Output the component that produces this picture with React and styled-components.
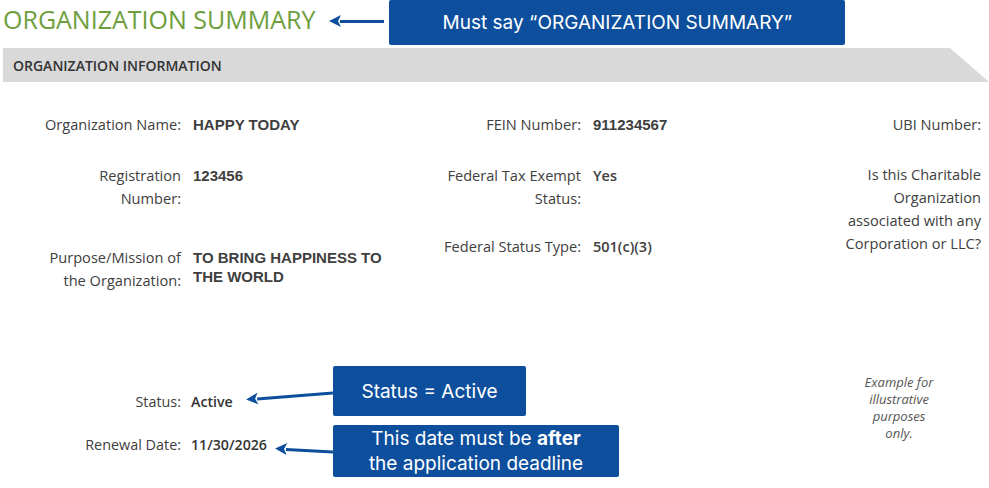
import React from 'react';
import styled, {createGlobalStyle} from 'styled-components';

const GlobalStyle = createGlobalStyle`
  html, body {
    margin: 0;
    padding: 0;
    background: #ffffff;
  }
  body {
    font-family: "Open Sans", "Liberation Sans", sans-serif;
    color: #3d3d3d;
  }
`;

const BLUE = '#0d4f9d';

const Page = styled.div`
  width: 989px;
  height: 488px;
  overflow: hidden;
  position: relative;
`;

const Header = styled.div`
  display: flex;
  align-items: flex-start;
  height: 45px;
  margin-left: 3px;
`;

const Title = styled.h1`
  margin: 0;
  padding-top: 4px;
  font-family: "Open Sans", sans-serif;
  font-weight: 400;
  font-size: 25px;
  line-height: 30px;
  color: #6e9e3c;
  white-space: nowrap;
`;

const Callout = styled.div`
  display: flex;
  align-items: center;
  justify-content: center;
  flex-direction: column;
  width: ${p => p.$w}px;
  height: ${p => p.$h}px;
  background: ${BLUE};
  border-radius: 2px;
  color: #ffffff;
  font-family: "Inter", "Roboto", sans-serif;
  font-size: 19px;
  line-height: 25px;
  text-align: center;
  flex-shrink: 0;

  b {
    font-weight: 700;
  }
`;

const ArrowWrap = styled.div`
  display: flex;
  align-items: center;
  width: ${p => (p.$w ? `${p.$w}px` : 'auto')};
  flex: ${p => (p.$w ? 'none' : '1')};
  height: 12px;
  margin: ${p => p.$m || '0'};
  transform: translateY(${p => p.$dy || 0}px) rotate(${p => p.$tilt || 0}deg);
  transform-origin: center;
`;

const ArrowShaft = styled.div`
  flex: 1;
  height: 3px;
  margin-left: -1px;
  background: ${BLUE};
`;

const Arrow = ({w, m, dy, tilt}) => (
  <ArrowWrap $w={w} $m={m} $dy={dy} $tilt={tilt}>
    <svg width="12" height="12" viewBox="0 0 12 12">
      <polygon points="0,6 12,0 9,6 12,12" fill={BLUE} />
    </svg>
    <ArrowShaft />
  </ArrowWrap>
);

const SectionBar = styled.div`
  display: flex;
  align-items: center;
  height: 34px;
  margin: 3px 0 0 3px;
  width: 986px;
  padding-left: 10px;
  box-sizing: border-box;
  background: #d9d9d9;
  clip-path: polygon(0 0, 947px 0, 100% 100%, 0 100%);
  font-weight: 600;
  font-size: 14px;
  color: #333333;
`;

const FieldGrid = styled.div`
  display: grid;
  grid-template-columns: 400px 400px 189px;
  padding-top: 31px;
  height: 253px;
  box-sizing: border-box;
`;

const Column = styled.div`
  display: flex;
  flex-direction: column;
`;

const Field = styled.div`
  display: grid;
  grid-template-columns: 181px 1fr;
  column-gap: 12px;
  margin-top: ${p => p.$gap || 0}px;
`;

const Label = styled.div`
  text-align: right;
  font-size: 14.6px;
  line-height: 23px;
  color: #404040;
  white-space: nowrap;
`;

const Value = styled.div`
  padding-top: 2px;
  font-family: ${p => (p.$open ? '"Open Sans", sans-serif' : '"Liberation Sans", Arial, sans-serif')};
  font-weight: ${p => (p.$open ? 600 : 700)};
  font-size: ${p => (p.$open ? 14.5 : 15)}px;
  line-height: 19px;
  color: #404040;
  padding-right: 8px;
`;

const Bottom = styled.div`
  display: flex;
  justify-content: space-between;
  margin-top: 31px;
`;

const StatusList = styled.div`
  display: flex;
  flex-direction: column;
  gap: 9px;
`;

const StatusRow = styled.div`
  display: grid;
  grid-template-columns: 181px 152px auto;
  align-items: start;
`;

const StatusLabel = styled.div`
  padding-top: ${p => p.$top}px;
  text-align: right;
  font-size: 14.4px;
  line-height: 20px;
  color: #404040;
  white-space: nowrap;
`;

const StatusCell = styled.div`
  display: flex;
  align-items: center;
  padding: ${p => p.$top}px 0 0 10px;
  height: 20px;
`;

const StatusValue = styled.span`
  font-weight: 600;
  font-size: 14.2px;
  line-height: 20px;
  color: #333333;
  white-space: nowrap;
`;

const Note = styled.div`
  width: 90px;
  margin: 8px 45px 0 0;
  font-style: italic;
  font-size: 13px;
  line-height: 17px;
  text-align: center;
  color: #555555;
`;

export default function App() {
  return (
    <Page>
      <GlobalStyle />
      <Header>
        <Title>ORGANIZATION SUMMARY</Title>
        <Arrow w={55} m="0 5px 0 14px" dy={15} />
        <Callout $w={456} $h={45}>Must say “ORGANIZATION SUMMARY”</Callout>
      </Header>

      <SectionBar>ORGANIZATION INFORMATION</SectionBar>

      <FieldGrid>
        <Column>
          <Field>
            <Label>Organization Name:</Label>
            <Value>HAPPY TODAY</Value>
          </Field>
          <Field $gap={28}>
            <Label>Registration<br />Number:</Label>
            <Value>123456</Value>
          </Field>
          <Field $gap={36}>
            <Label>Purpose/Mission of<br />the Organization:</Label>
            <Value>TO BRING HAPPINESS TO THE WORLD</Value>
          </Field>
        </Column>
        <Column>
          <Field>
            <Label>FEIN Number:</Label>
            <Value>911234567</Value>
          </Field>
          <Field $gap={28}>
            <Label>Federal Tax Exempt<br />Status:</Label>
            <Value $open>Yes</Value>
          </Field>
          <Field $gap={25}>
            <Label>Federal Status Type:</Label>
            <Value $open>501(c)(3)</Value>
          </Field>
        </Column>
        <Column>
          <Field>
            <Label>UBI Number:</Label>
          </Field>
          <Field $gap={27}>
            <Label>
              Is this Charitable<br />
              Organization<br />
              associated with any<br />
              Corporation or LLC?
            </Label>
          </Field>
        </Column>
      </FieldGrid>

      <Bottom>
        <StatusList>
          <StatusRow>
            <StatusLabel $top={26}>Status:</StatusLabel>
            <StatusCell $top={26}>
              <StatusValue>Active</StatusValue>
              <Arrow m="0 0 0 13px" dy={-6} tilt={-4.5} />
            </StatusCell>
            <Callout $w={193} $h={50}>Status = Active</Callout>
          </StatusRow>
          <StatusRow>
            <StatusLabel $top={10}>Renewal Date:</StatusLabel>
            <StatusCell $top={10}>
              <StatusValue>11/30/2026</StatusValue>
              <Arrow m="0 0 0 8px" dy={5} tilt={3} />
            </StatusCell>
            <Callout $w={286} $h={52}>
              <span>This date must be <b>after</b></span>
              <span>the application deadline</span>
            </Callout>
          </StatusRow>
        </StatusList>
        <Note>
          Example for<br />
          illustrative<br />
          purposes<br />
          only.
        </Note>
      </Bottom>
    </Page>
  );
}
